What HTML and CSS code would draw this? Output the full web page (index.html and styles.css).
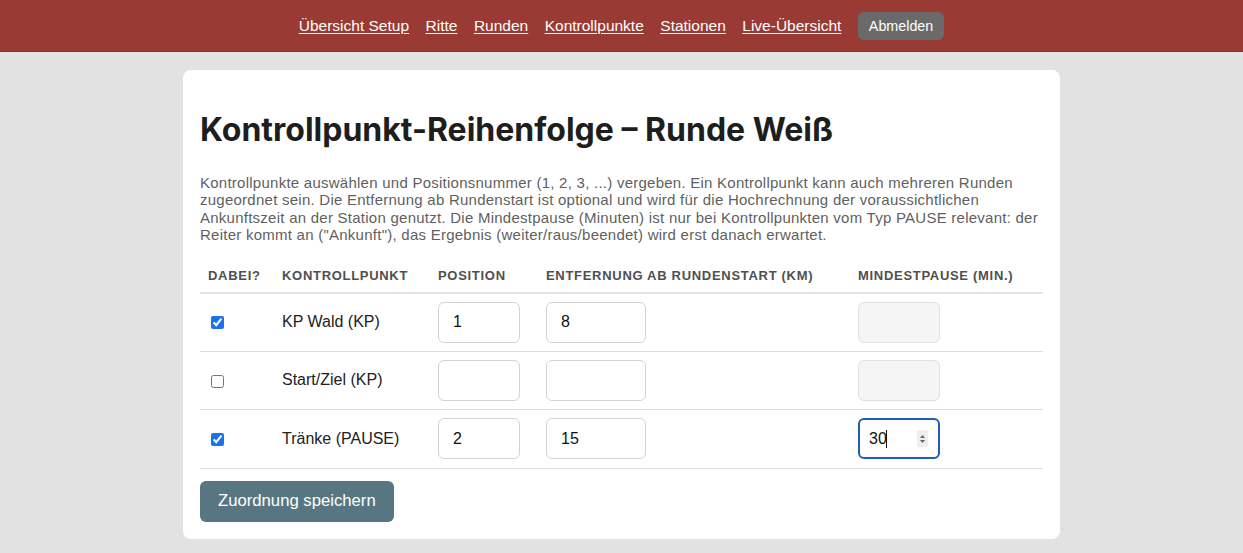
FILE: index.html
```html
<!DOCTYPE html>
<html lang="de">
<head>
<meta charset="utf-8">
<title>Kontrollpunkt-Reihenfolge</title>
<link rel="stylesheet" href="styles.css">
</head>
<body>
<header class="topbar">
  <nav class="nav">
    <a href="#">Übersicht Setup</a>
    <a href="#">Ritte</a>
    <a href="#">Runden</a>
    <a href="#">Kontrollpunkte</a>
    <a href="#">Stationen</a>
    <a href="#">Live-Übersicht</a>
    <button class="logout" type="button">Abmelden</button>
  </nav>
</header>
<main class="card">
  <h1 class="title">Kontrollpunkt-Reihenfolge – Runde Weiß</h1>
  <p class="intro">Kontrollpunkte auswählen und Positionsnummer (1, 2, 3, ...) vergeben. Ein Kontrollpunkt kann auch mehreren Runden zugeordnet sein. Die Entfernung ab Rundenstart ist optional und wird für die Hochrechnung der voraussichtlichen Ankunftszeit an der Station genutzt. Die Mindestpause (Minuten) ist nur bei Kontrollpunkten vom Typ PAUSE relevant: der Reiter kommt an ("Ankunft"), das Ergebnis (weiter/raus/beendet) wird erst danach erwartet.</p>
  <table class="grid">
    <thead>
      <tr>
        <th class="c-dabei">Dabei?</th>
        <th class="c-kp">Kontrollpunkt</th>
        <th class="c-pos">Position</th>
        <th class="c-dist">Entfernung ab Rundenstart (km)</th>
        <th class="c-pause">Mindestpause (Min.)</th>
      </tr>
    </thead>
    <tbody>
      <tr>
        <td class="c-dabei"><input type="checkbox" checked></td>
        <td class="c-kp">KP Wald (KP)</td>
        <td class="c-pos"><input class="field f-pos" type="text" value="1"></td>
        <td class="c-dist"><input class="field f-dist" type="text" value="8"></td>
        <td class="c-pause"><input class="field f-pos" type="text" value="" disabled></td>
      </tr>
      <tr>
        <td class="c-dabei"><input type="checkbox"></td>
        <td class="c-kp">Start/Ziel (KP)</td>
        <td class="c-pos"><input class="field f-pos" type="text" value=""></td>
        <td class="c-dist"><input class="field f-dist" type="text" value=""></td>
        <td class="c-pause"><input class="field f-pos" type="text" value="" disabled></td>
      </tr>
      <tr>
        <td class="c-dabei"><input type="checkbox" checked></td>
        <td class="c-kp">Tränke (PAUSE)</td>
        <td class="c-pos"><input class="field f-pos" type="text" value="2"></td>
        <td class="c-dist"><input class="field f-dist" type="text" value="15"></td>
        <td class="c-pause">
          <span class="focus-wrap">
            <input class="field f-pos is-focused" type="text" value="30">
            <span class="caret"></span>
            <span class="spin">
              <svg width="7" height="12" viewBox="0 0 7 12"><path d="M3.5 2 L6 5 H1 Z" fill="#666"/><path d="M3.5 10 L6 7 H1 Z" fill="#666"/></svg>
            </span>
          </span>
        </td>
      </tr>
    </tbody>
  </table>
  <button class="save" type="button">Zuordnung speichern</button>
</main>
</body>
</html>
```
FILE: styles.css
```css
* { box-sizing: border-box; }
html, body { margin: 0; padding: 0; }
body {
  background: #e2e2e2;
  font-family: "Liberation Sans", Arial, sans-serif;
  color: #222;
  height: 553px;
  overflow: hidden;
}
.topbar {
  background: #993b34;
  height: 52px;
  display: flex;
  align-items: center;
  justify-content: center;
  border-bottom: 1px solid #8a342e;
}
.nav {
  display: flex;
  align-items: center;
  gap: 16.5px;
  padding-top: 1px;
}
.nav a {
  color: #fff;
  font-size: 15.5px;
  text-decoration: underline;
  text-underline-offset: 2px;
}
.logout {
  background: #6a6a6a;
  color: #fff;
  border: 0;
  border-radius: 6px;
  font-family: "Liberation Sans", Arial, sans-serif;
  font-size: 14.3px;
  height: 28px;
  padding: 0 11px;
}
.card {
  width: 877px;
  margin: 18px auto 0;
  background: #fff;
  border-radius: 8px;
  padding: 38px 17px 17px;
}
.title {
  font-family: Inter, "Liberation Sans", sans-serif;
  font-weight: 700;
  font-size: 32px;
  letter-spacing: 0;
  line-height: 44px;
  margin: 0 0 22px;
  color: #1e1e1e;
}
.intro {
  font-size: 15px;
  line-height: 17.4px;
  letter-spacing: 0.25px;
  color: #5f5f5f;
  margin: 0 0 16px;
}
.grid {
  width: 100%;
  border-collapse: collapse;
}
.grid th {
  text-align: left;
  font-size: 13px;
  font-weight: 700;
  text-transform: uppercase;
  letter-spacing: 0.7px;
  color: #4f4f4f;
  padding: 8px 8px 9px;
  border-bottom: 2px solid #e4e4e4;
}
.grid td {
  padding: 8px 8px;
  height: 58.5px;
  border-bottom: 1px solid #dedede;
  font-size: 16px;
  color: #222;
  vertical-align: middle;
}
.grid th.c-pos, .grid td.c-pos,
.grid th.c-dist, .grid td.c-dist,
.grid th.c-pause, .grid td.c-pause { padding-left: 0; }
.c-dabei { width: 74px; }
.c-kp { width: 164px; }
.c-pos { width: 108px; }
.c-dist { width: 312px; }
.grid td.c-dabei { padding-left: 11px; }
.grid td.c-dabei input {
  width: 13px;
  height: 13px;
  margin: 0;
  accent-color: #1a73e8;
  vertical-align: middle;
}
.field {
  height: 41px;
  border: 1px solid #d3d3d3;
  border-radius: 6px;
  padding: 0 14px;
  font-family: "Liberation Sans", Arial, sans-serif;
  font-size: 16px;
  color: #111;
  background: #fff;
  outline: none;
}
.field:disabled { background: #f5f5f5; border-color: #e0e0e0; }
.f-pos { width: 82px; }
.f-dist { width: 100px; }
.focus-wrap { position: relative; display: inline-block; }
.is-focused {
  border: 2px solid #1c5fb5;
  padding-left: 9px;
  display: block;
}
.caret {
  position: absolute;
  left: 28px;
  top: 12px;
  width: 1px;
  height: 18px;
  background: #111;
}
.spin {
  position: absolute;
  right: 12px;
  top: 12px;
  width: 11px;
  height: 17px;
  background: #eeeeee;
  border-radius: 2px;
  display: flex;
  align-items: center;
  justify-content: center;
}
.save {
  margin-top: 12px;
  background: #587681;
  color: #fff;
  border: 0;
  border-radius: 6px;
  font-family: "Liberation Sans", Arial, sans-serif;
  font-size: 16.7px;
  height: 41px;
  padding: 0 18px;
}
```
